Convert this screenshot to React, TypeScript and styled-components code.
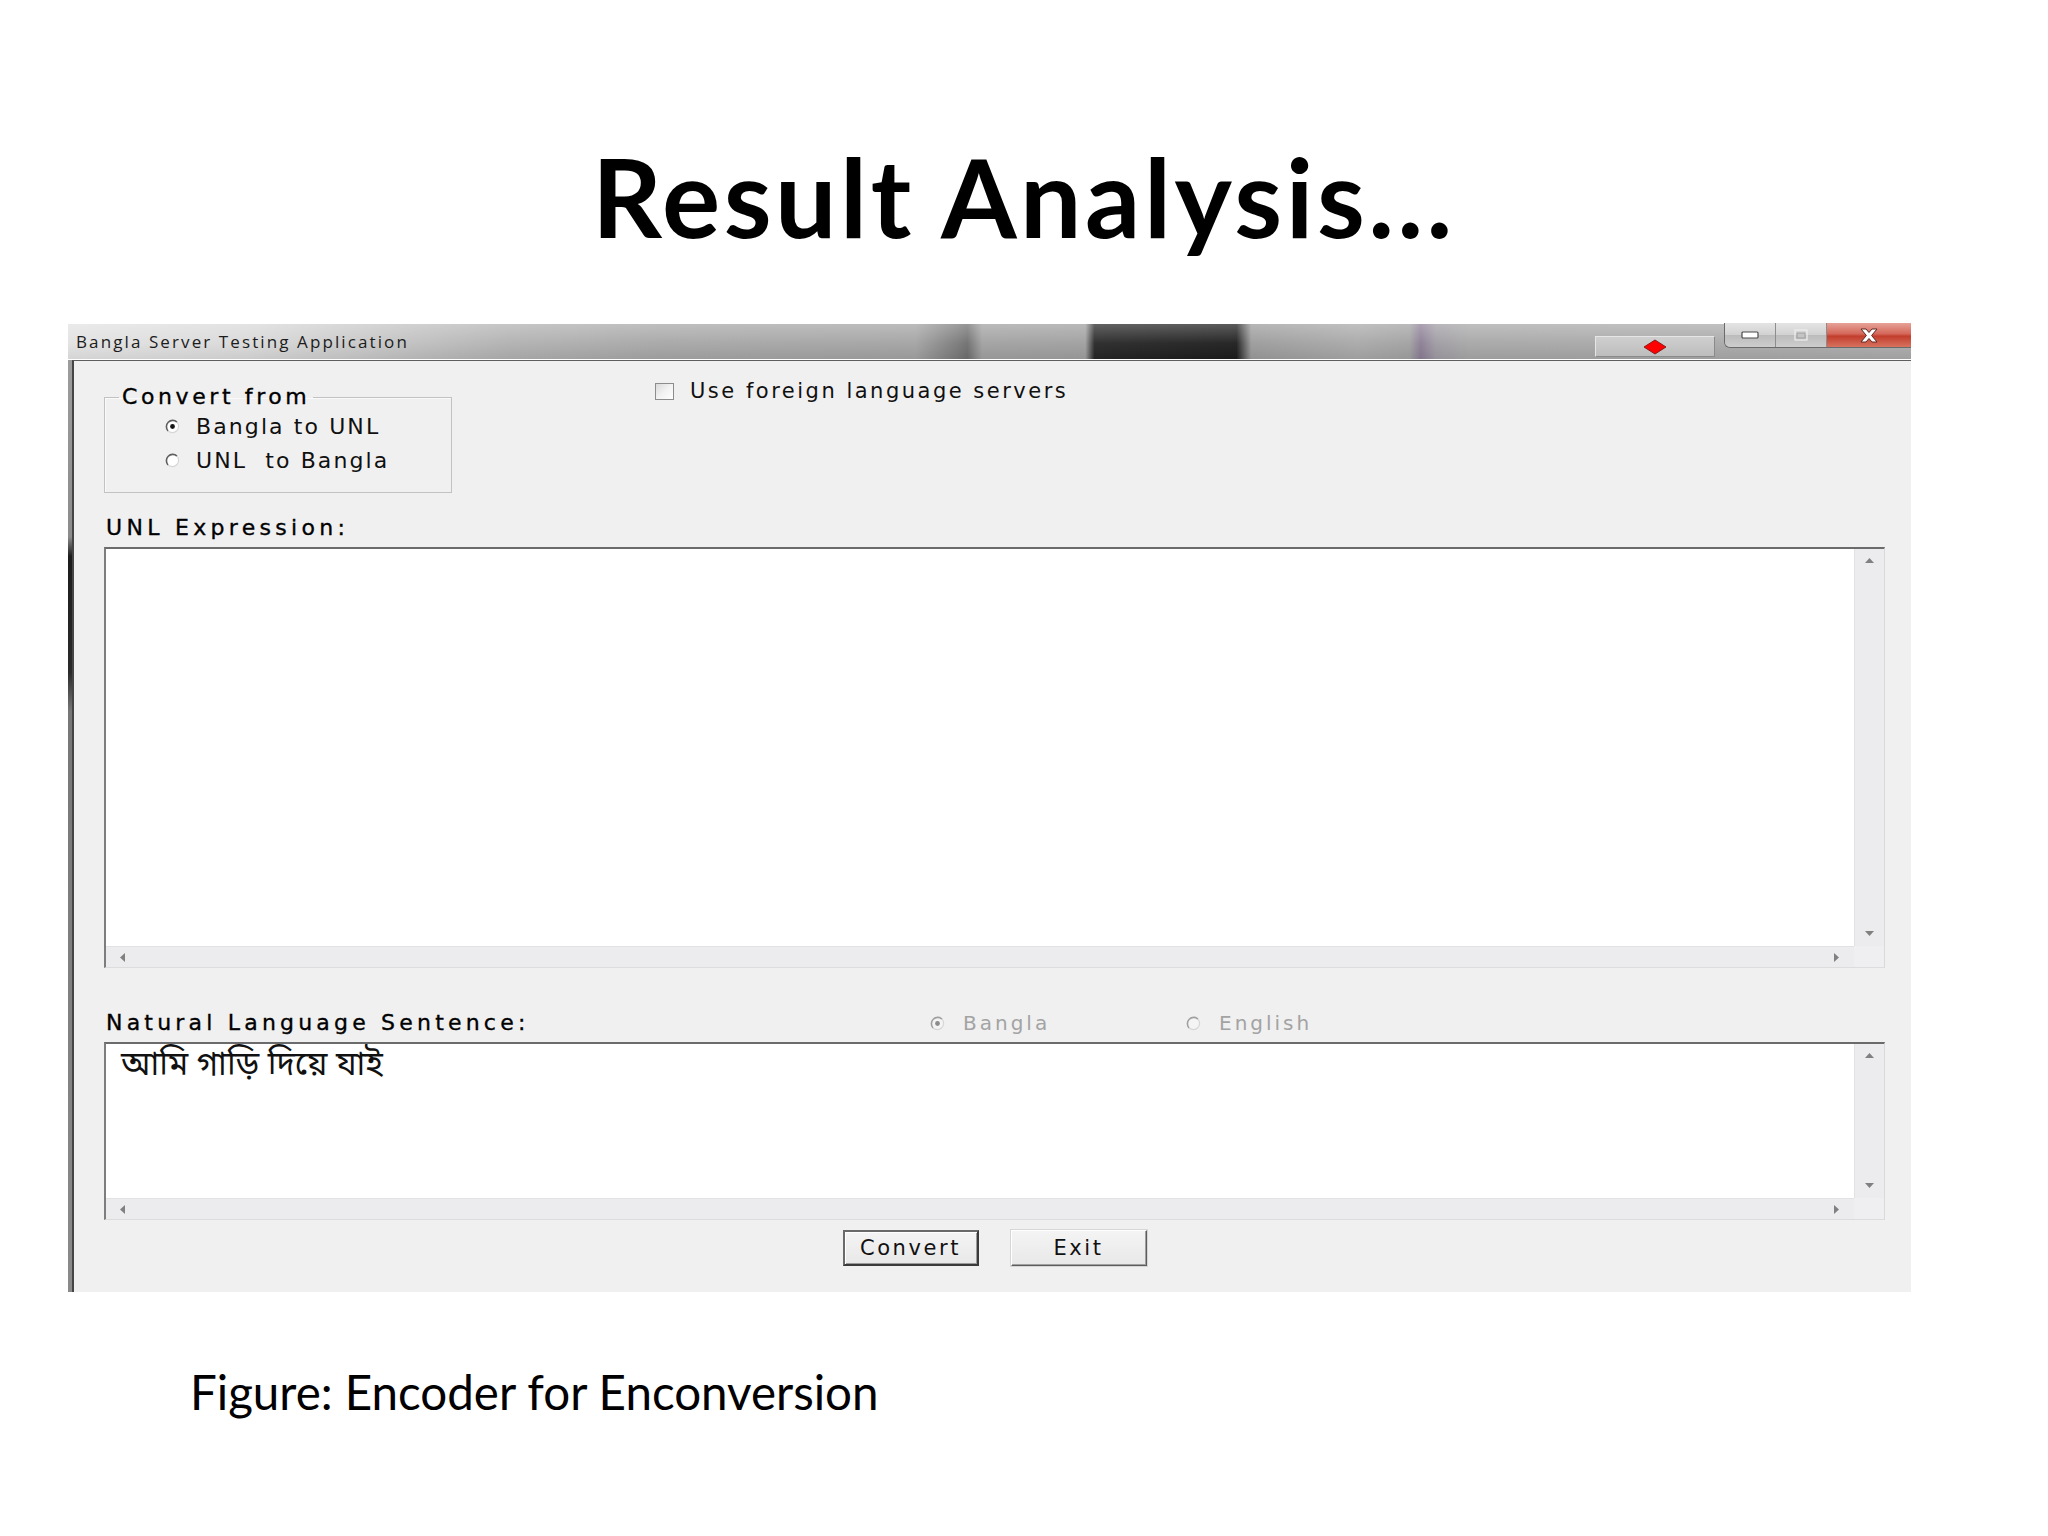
import React from 'react';
import styled, { createGlobalStyle, css } from 'styled-components';

const GlobalStyle = createGlobalStyle`
  html, body {
    margin: 0;
    padding: 0;
    background: #ffffff;
  }
  body {
    width: 2048px;
    height: 1536px;
    overflow: hidden;
  }
`;

const UI_FONT = `'DejaVu Sans', Verdana, sans-serif`;

const Slide = styled.div`
    width: 2048px;
    height: 1536px;
    display: flex;
    flex-direction: column;
    align-items: flex-start;
    background: #ffffff;
    font-family: Lato, 'Open Sans', sans-serif;
`;

const SlideTitle = styled.h1`
    align-self: stretch;
    margin: 141px 0 0;
    font-family: Lato, 'Open Sans', sans-serif;
    font-weight: 700;
    font-size: 109px;
    line-height: 109px;
    letter-spacing: 3.5px;
    text-align: center;
    color: #000000;
`;

const Caption = styled.p`
    margin: 76px 0 0 190px;
    font-family: Lato, 'Open Sans', sans-serif;
    font-size: 47.5px;
    line-height: 47.5px;
    color: #000000;
`;

/* ---------- window chrome ---------- */

const Window = styled.div`
    margin: 74px 0 0 68px;
    width: 1843px;
    height: 968px;
    display: flex;
    flex-direction: column;
    background: linear-gradient(to bottom, #a0a0a0 0%, #8c8c8c 22%, #1c1c1c 24%, #2a2a2a 36%, #777777 40%, #8a8a8a 100%);
`;

const TitleBar = styled.div`
    height: 35px;
    display: flex;
    align-items: flex-start;
    border-bottom: 1px solid #ffffff;
    background:
        linear-gradient(to bottom, rgba(255, 255, 255, 0.28) 0%, rgba(255, 255, 255, 0.05) 55%, rgba(0, 0, 0, 0.06) 100%),
        linear-gradient(to right,
            #e2e2e2 0%, #d8d8d8 10%, #c4c4c4 17%, #b0b0b0 24%, #a6a6a6 32%, #a2a2a2 46%,
            #7a7a7a 48.2%, #6e6e6e 48.8%, #a0a0a0 49.6%, #9e9e9e 55.2%,
            #262626 55.7%, #1c1c1c 63.4%, #9a9a9a 64.2%, #a8a8a8 70%, #a0a0a0 72.8%,
            #8a7c94 73.4%, #9e9aa2 74.2%, #a6a6a6 76%, #aaaaaa 100%);
`;

const TitleText = styled.span`
    flex: 1;
    padding-left: 8px;
    font-family: 'Open Sans', 'Noto Sans', sans-serif;
    font-size: 17px;
    line-height: 36px;
    letter-spacing: 2.1px;
    color: #1c1c1c;
`;

const DiamondButton = styled.div`
    width: 118px;
    height: 19px;
    margin: 12px 9px 0 0;
    display: flex;
    align-items: center;
    justify-content: center;
    background: linear-gradient(to bottom, #cfcfcf, #bdbdbd);
    border: 1px solid;
    border-color: #e6e6e6 #8a8a8a #8a8a8a #e6e6e6;
`;

const CaptionGroup = styled.div`
    height: 24px;
    margin-top: -1px;
    display: flex;
    border: 1px solid #6a6a6a;
    border-top: none;
    border-right: none;
    border-radius: 0 0 0 6px;
    overflow: hidden;
`;

const CaptionButton = styled.div<{ $width: number; $close?: boolean }>`
    width: ${p => p.$width}px;
    display: flex;
    align-items: center;
    justify-content: center;
    border-left: 1px solid #8d8d8d;
    background: linear-gradient(to bottom, #e4e4e4 0%, #d2d2d2 48%, #bcbcbc 52%, #cdcdcd 100%);
    &:first-child {
        border-left: none;
    }
    ${p => p.$close && css`
        background: linear-gradient(to bottom, #e7a297 0%, #d4685a 45%, #c23d2c 55%, #d7735f 100%);
    `}
`;

const WindowBody = styled.div`
    flex: 1;
    display: flex;
    flex-direction: column;
    margin-left: 4px;
    padding: 0 26px 0 30px;
    border-top: 1px solid #5e5e5e;
    border-left: 2px solid #454545;
    background: #f0f0f0;
    font-family: ${UI_FONT};
    color: #000000;
`;

/* ---------- form parts ---------- */

const TopRow = styled.div`
    display: flex;
    align-items: flex-start;
`;

const GroupBox = styled.fieldset`
    margin: 24px 0 0;
    width: 346px;
    padding: 0 0 15px;
    border: 1px solid #c2c2c2;
    box-shadow: inset 1px 1px 0 #fafafa;
`;

const GroupLegend = styled.legend`
    margin-left: 14px;
    padding: 0 3px;
    font-size: 22px;
    line-height: 24px;
    letter-spacing: 3.6px;
    -webkit-text-stroke: 0.35px #000;
`;

const GroupOptions = styled.div`
    padding-left: 60px;
`;

const OptionRow = styled.div<{ $height: number; $width?: number; $disabled?: boolean }>`
    display: flex;
    align-items: center;
    height: ${p => p.$height}px;
    ${p => p.$width && css`flex: none; width: ${p.$width}px;`}
    color: ${p => (p.$disabled ? '#a3a3a3' : '#101010')};
`;

const OptionText = styled.span<{ $size: number; $spacing: number }>`
    font-size: ${p => p.$size}px;
    letter-spacing: ${p => p.$spacing}px;
    white-space: pre;
`;

const RadioSvg = styled.svg<{ $gap: number }>`
    flex: none;
    width: 15px;
    height: 15px;
    margin-right: ${p => p.$gap}px;
`;

const CheckBoxFace = styled.span`
    flex: none;
    width: 17px;
    height: 15px;
    margin-right: 16px;
    border: 1px solid #8c8c8c;
    background: linear-gradient(135deg, #dadada 0%, #f2f2f2 50%, #ffffff 100%);
`;

const CheckOption = styled(OptionRow)`
    margin: 18px 0 0 203px;
`;

const FieldLabel = styled.div<{ $spacing: number; $width?: number }>`
    ${p => p.$width && css`flex: none; width: ${p.$width}px;`}
    padding-left: 2px;
    font-size: 22px;
    line-height: 24px;
    letter-spacing: ${p => p.$spacing}px;
    -webkit-text-stroke: 0.35px #000;
    white-space: pre;
`;

const UnlLabel = styled(FieldLabel)`
    margin-top: 23px;
`;

const NaturalRow = styled.div`
    display: flex;
    align-items: center;
    height: 24px;
    margin-top: 43px;
`;

const ScrollBox = styled.div<{ $height: number }>`
    height: ${p => p.$height}px;
    margin-top: 7px;
    display: grid;
    grid-template-columns: 1fr 30px;
    grid-template-rows: 1fr 21px;
    box-sizing: border-box;
    border-top: 2px solid #6b6b6b;
    border-left: 2px solid #7d7d7d;
    border-right: 1px solid #d9d9d9;
    border-bottom: 1px solid #dcdcdc;
    background: #ececee;
`;

const TextArea = styled.div`
    background: #ffffff;
    padding: 5px 0 0 15px;
    font-family: 'Noto Sans Bengali', 'Noto Serif Bengali', 'Noto Sans', sans-serif;
    font-size: 33px;
    line-height: 36px;
    color: #111111;
`;

const VScroll = styled.div`
    display: flex;
    flex-direction: column;
    align-items: center;
    justify-content: space-between;
    padding: 9px 0 10px;
    border-left: 1px solid #e2e2e4;
`;

const HScroll = styled.div`
    display: flex;
    align-items: center;
    justify-content: space-between;
    padding: 0 15px 0 14px;
    border-top: 1px solid #e2e2e4;
`;

const Corner = styled.div`
    background: #efeff1;
`;

const ButtonRow = styled.div`
    display: flex;
    justify-content: center;
    gap: 32px;
    margin-top: 10px;
`;

const PushButton = styled.button<{ $default?: boolean }>`
    width: 136px;
    height: 36px;
    padding: 0;
    font-family: ${UI_FONT};
    font-size: 21px;
    letter-spacing: 2.6px;
    color: #111111;
    background: linear-gradient(to bottom, #f4f4f4, #e8e8e8);
    border: 1px solid;
    border-color: #ffffff #5c5c5c #5c5c5c #ffffff;
    box-shadow: inset -1px -1px 0 #a0a0a0, 0 0 0 1px #d6d6d6;
    ${p => p.$default && css`
        border: 2px solid #3a3a3a;
        border-top-color: #6a6a6a;
        border-left-color: #6a6a6a;
        box-shadow: inset 1px 1px 0 #ffffff, inset -1px -1px 0 #9a9a9a;
    `}
`;

/* ---------- small drawings ---------- */

const Radio: React.FC<{ checked?: boolean; disabled?: boolean; gap?: number }> = ({ checked, disabled, gap = 18 }) => (
    <RadioSvg viewBox="0 0 15 15" $gap={gap}>
        <circle cx="7.5" cy="7.5" r="6.3" fill={disabled ? '#f4f4f4' : '#ffffff'} />
        <path d="M3.05 11.95 A6.3 6.3 0 0 1 11.95 3.05" fill="none" stroke={disabled ? '#a0a0a0' : '#5e5e5e'} strokeWidth="1.6" />
        <path d="M11.95 3.05 A6.3 6.3 0 0 1 3.05 11.95" fill="none" stroke="#d6d6d6" strokeWidth="1.2" />
        {checked && <circle cx="7.5" cy="7.5" r="2.4" fill={disabled ? '#8c8c8c' : '#151515'} />}
    </RadioSvg>
);

type ArrowDir = 'up' | 'down' | 'left' | 'right';

const ARROWS: Record<ArrowDir, string> = {
    up: '0,5 4.5,0 9,5',
    down: '0,0 9,0 4.5,5',
    left: '5,0 5,9 0,4.5',
    right: '0,0 5,4.5 0,9',
};

const Arrow: React.FC<{ dir: ArrowDir }> = ({ dir }) => {
    const vertical = dir === 'up' || dir === 'down';
    return (
        <svg width={vertical ? 9 : 5} height={vertical ? 5 : 9} viewBox={vertical ? '0 0 9 5' : '0 0 5 9'}>
            <polygon points={ARROWS[dir]} fill="#808080" />
        </svg>
    );
};

const TextBox: React.FC<{ height: number; children?: React.ReactNode }> = ({ height, children }) => (
    <ScrollBox $height={height}>
        <TextArea>{children}</TextArea>
        <VScroll>
            <Arrow dir="up" />
            <Arrow dir="down" />
        </VScroll>
        <HScroll>
            <Arrow dir="left" />
            <Arrow dir="right" />
        </HScroll>
        <Corner />
    </ScrollBox>
);

const MinimizeIcon = () => (
    <svg width="18" height="8" viewBox="0 0 18 8">
        <rect x="1" y="1" width="16" height="6" rx="1" fill="#ffffff" stroke="#4a4a4a" strokeWidth="1.2" />
    </svg>
);

const MaximizeIcon = () => (
    <svg width="14" height="12" viewBox="0 0 14 12">
        <rect x="1" y="1" width="12" height="10" fill="none" stroke="#eeeeee" strokeWidth="1.2" />
        <rect x="3" y="4" width="8" height="5" fill="#c4c4c4" stroke="#9a9a9a" strokeWidth="0.8" />
    </svg>
);

const CloseIcon = () => (
    <svg width="22" height="15" viewBox="0 0 22 15">
        <path d="M3 1 H8 L11 4.5 L14 1 H19 L13.6 7.5 L19 14 H14 L11 10.5 L8 14 H3 L8.4 7.5 Z" fill="#ffffff" stroke="#5a2a24" strokeWidth="1" />
    </svg>
);

const Diamond = () => (
    <svg width="24" height="16" viewBox="0 0 24 16">
        <polygon points="12,1 23,8 12,15 1,8" fill="#ff0000" stroke="#8a1a1a" strokeWidth="1" />
    </svg>
);

export default function App() {
    return (
        <>
            <GlobalStyle />
            <Slide>
                <SlideTitle>Result Analysis…</SlideTitle>
                <Window>
                    <TitleBar>
                        <TitleText>Bangla Server Testing Application</TitleText>
                        <DiamondButton>
                            <Diamond />
                        </DiamondButton>
                        <CaptionGroup>
                            <CaptionButton $width={50}>
                                <MinimizeIcon />
                            </CaptionButton>
                            <CaptionButton $width={50}>
                                <MaximizeIcon />
                            </CaptionButton>
                            <CaptionButton $width={84} $close>
                                <CloseIcon />
                            </CaptionButton>
                        </CaptionGroup>
                    </TitleBar>
                    <WindowBody>
                        <TopRow>
                            <GroupBox>
                                <GroupLegend>Convert from</GroupLegend>
                                <GroupOptions>
                                    <OptionRow $height={34}>
                                        <Radio checked gap={16} />
                                        <OptionText $size={22} $spacing={2.1}>Bangla to UNL</OptionText>
                                    </OptionRow>
                                    <OptionRow $height={34}>
                                        <Radio gap={16} />
                                        <OptionText $size={22} $spacing={2.1}>UNL  to Bangla</OptionText>
                                    </OptionRow>
                                </GroupOptions>
                            </GroupBox>
                            <CheckOption $height={24}>
                                <CheckBoxFace />
                                <OptionText $size={21} $spacing={2.5}>Use foreign language servers</OptionText>
                            </CheckOption>
                        </TopRow>
                        <UnlLabel $spacing={4.3}>UNL Expression:</UnlLabel>
                        <TextBox height={421} />
                        <NaturalRow>
                            <FieldLabel $spacing={4.2} $width={824}>Natural Language Sentence:</FieldLabel>
                            <OptionRow $height={24} $width={256} $disabled>
                                <Radio checked disabled />
                                <OptionText $size={20} $spacing={3}>Bangla</OptionText>
                            </OptionRow>
                            <OptionRow $height={24} $disabled>
                                <Radio disabled />
                                <OptionText $size={20} $spacing={3}>English</OptionText>
                            </OptionRow>
                        </NaturalRow>
                        <TextBox height={178}>আমি গাড়ি দিয়ে যাই</TextBox>
                        <ButtonRow>
                            <PushButton $default>Convert</PushButton>
                            <PushButton>Exit</PushButton>
                        </ButtonRow>
                    </WindowBody>
                </Window>
                <Caption>Figure: Encoder for Enconversion</Caption>
            </Slide>
        </>
    );
}
